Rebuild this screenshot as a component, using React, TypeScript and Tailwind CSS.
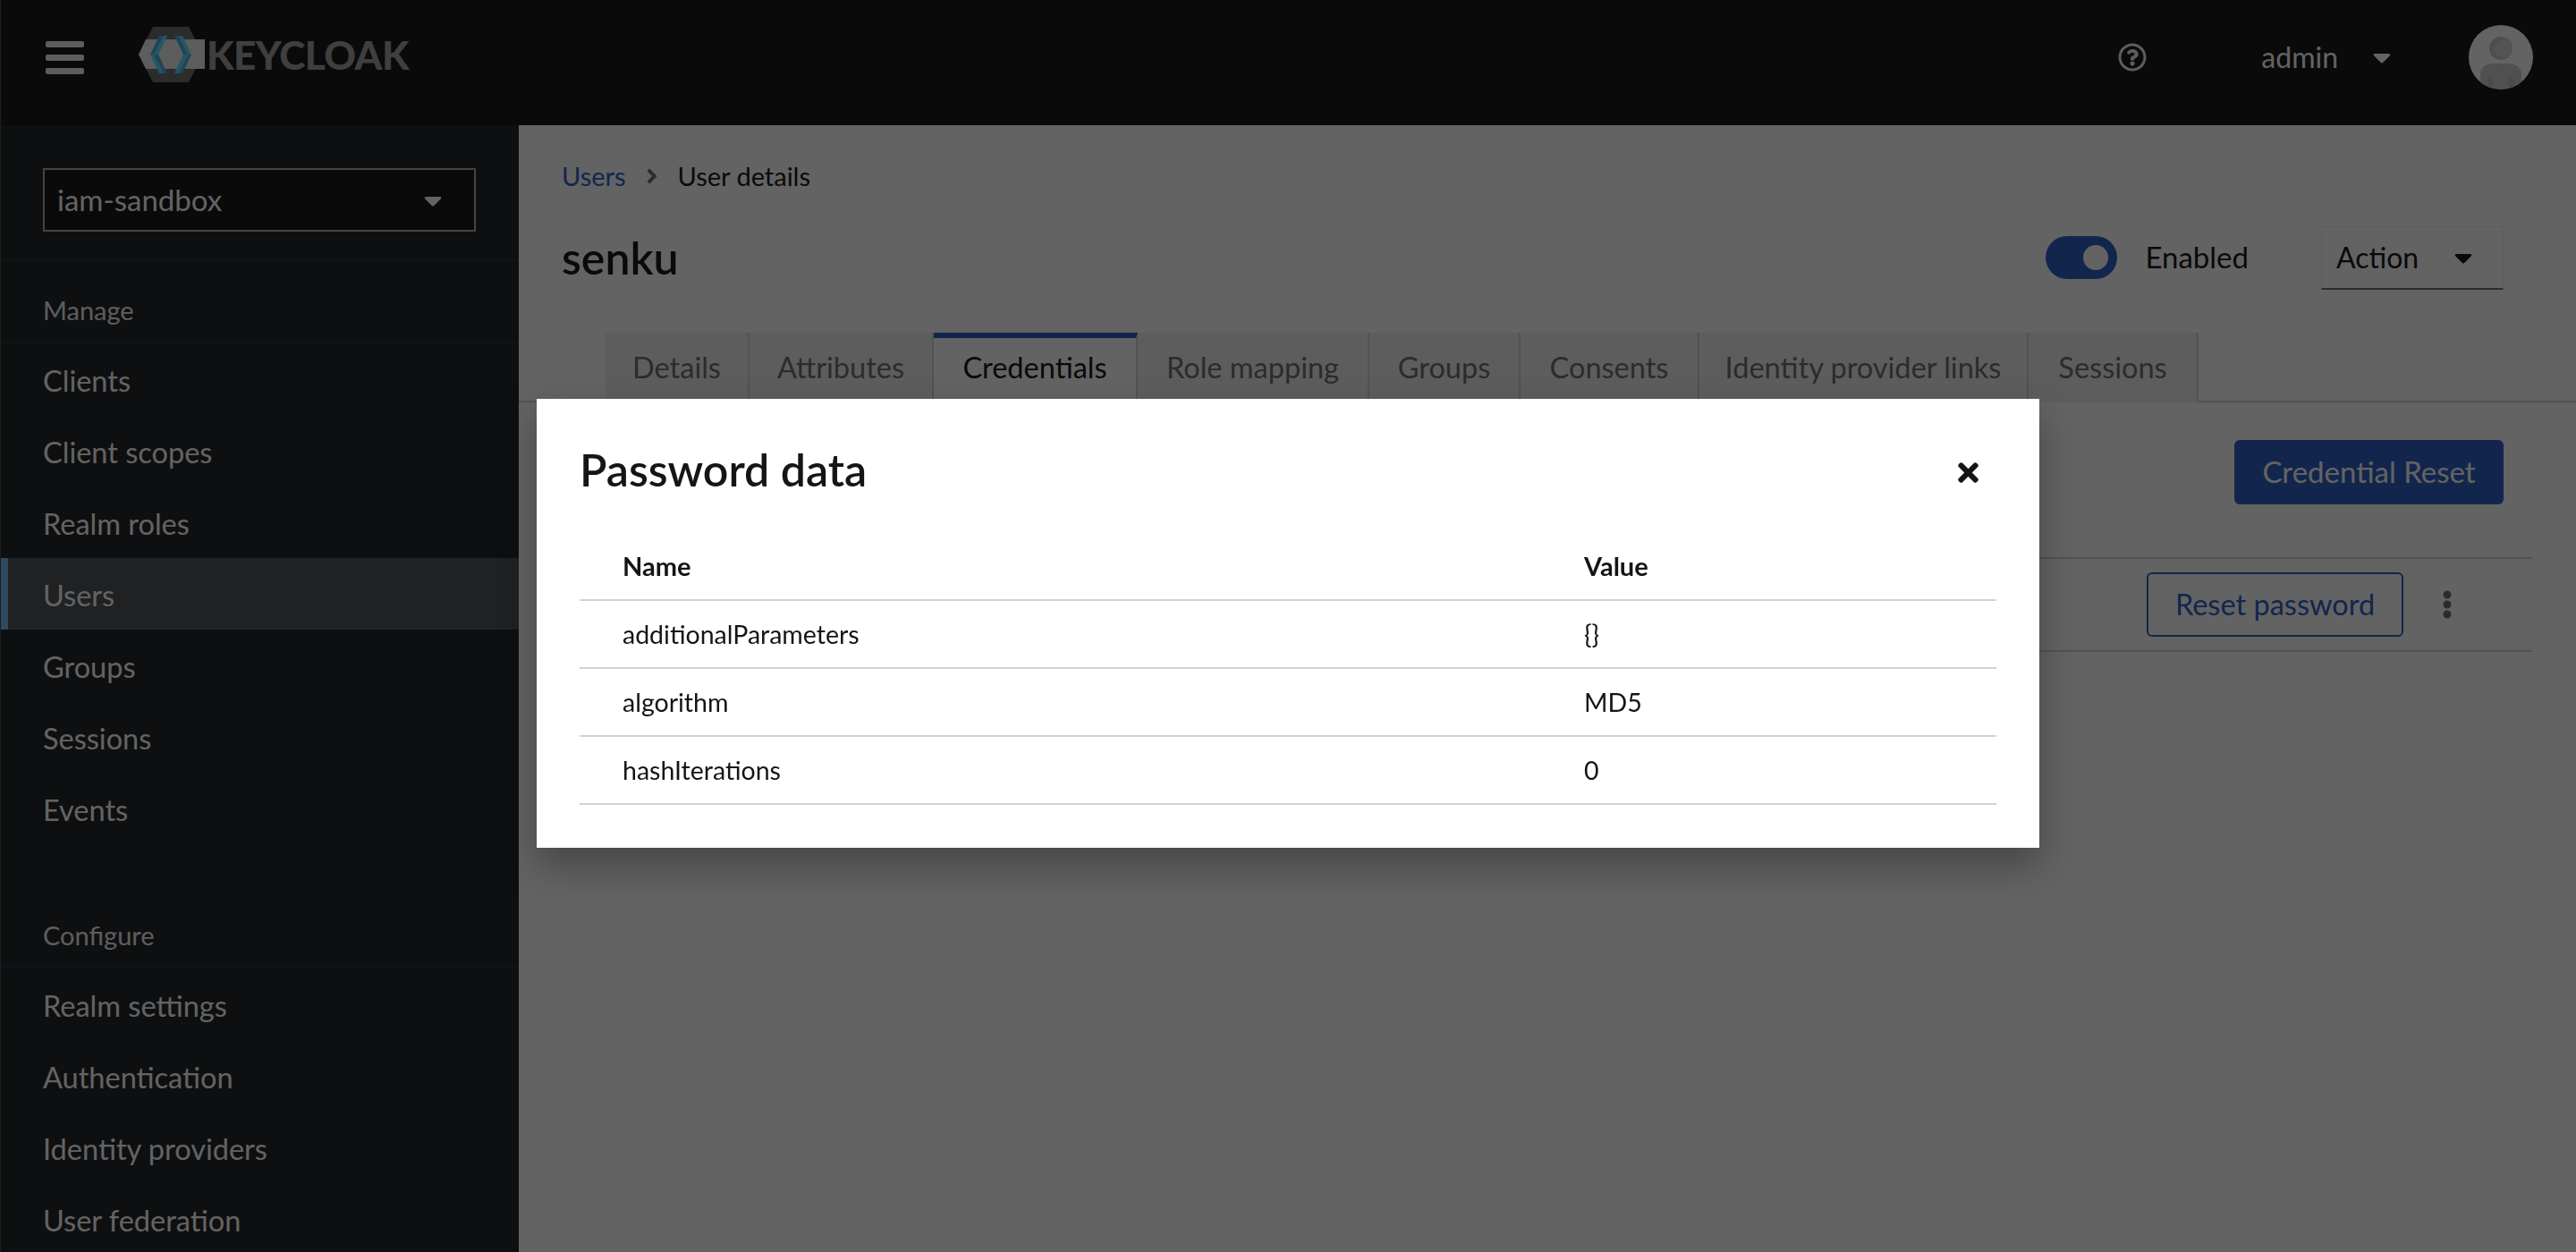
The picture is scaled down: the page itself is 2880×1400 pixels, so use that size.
import React from "react";
import { FaAngleRight, FaCaretDown, FaEllipsisV, FaRegQuestionCircle, FaTimes } from "react-icons/fa";

const manageItems = ["Clients", "Client scopes", "Realm roles", "Users", "Groups", "Sessions", "Events"];
const configureItems = ["Realm settings", "Authentication", "Identity providers", "User federation"];
const tabs = [
    { label: "Details", width: "w-[161px]" },
    { label: "Attributes", width: "w-[206px]" },
    { label: "Credentials", width: "w-[228px]" },
    { label: "Role mapping", width: "w-[259px]" },
    { label: "Groups", width: "w-[169px]" },
    { label: "Consents", width: "w-[200px]" },
    { label: "Identity provider links", width: "w-[368px]" },
    { label: "Sessions", width: "w-[190px]" },
];
const passwordData = [
    { name: "additionalParameters", value: "{}" },
    { name: "algorithm", value: "MD5" },
    { name: "hashIterations", value: "0" },
];

function Caret({ className }: { className: string }) {
    return <FaCaretDown className={`h-8 w-5 shrink-0 ${className}`} />;
}

function Logo() {
    return (
        <div className="mb-[6px] ml-[61px] flex items-center">
            <svg width="74" height="62" viewBox="0 0 74 62" className="shrink-0">
                <polygon points="0,31 16,0 56,0 72,31 56,62 16,62" fill="#6f6f6f" />
                <polygon points="0,31 8,14 74,14 74,47 8,47" fill="#eeeeee" />
                {/* left chevron */}
                <polygon points="23,10 28,10 17,31 13,31" fill="#47b0e2" />
                <polygon points="28,10 32,10 22,31 17,31" fill="#5ae0ff" />
                <polygon points="13,31 17,31 28,52 23,52" fill="#5ae0ff" />
                <polygon points="17,31 22,31 32,52 28,52" fill="#47b0e2" />
                {/* right chevron */}
                <polygon points="40,10 45,10 55,31 50,31" fill="#47b0e2" />
                <polygon points="45,10 49,10 59,31 55,31" fill="#5ae0ff" />
                <polygon points="50,31 55,31 45,52 40,52" fill="#5ae0ff" />
                <polygon points="55,31 59,31 49,52 45,52" fill="#47b0e2" />
            </svg>
            <span className="ml-[2px] text-[44px] leading-none font-black tracking-[-0.5px] text-[#a0a0a0]">KEYCLOAK</span>
        </div>
    );
}

function Avatar() {
    return (
        <svg width="72" height="72" viewBox="0 0 72 72" className="mr-[48px] shrink-0">
            <clipPath id="avatar-clip">
                <circle cx="36" cy="36" r="36" />
            </clipPath>
            <g clipPath="url(#avatar-clip)">
                <rect width="72" height="72" fill="#ffffff" />
                <circle cx="36" cy="26" r="13" fill="#c9c9c9" />
                <circle cx="39" cy="26" r="10" fill="#d8d8d8" />
                <path d="M13 72 V55 C13 47 20 43 28 43 H44 C52 43 59 47 59 55 V72 Z" fill="#cdcdcd" />
                <path d="M21 72 V62 C21 60 24 58 27 59 V72 Z" fill="#bdbdbd" />
                <path d="M51 72 V62 C51 60 48 58 45 59 V72 Z" fill="#bdbdbd" />
            </g>
        </svg>
    );
}

function NavItem({ label }: { label: string }) {
    const active = label === "Users";
    return (
        <div className={`flex h-[80px] items-center pt-[4px] text-[32.5px] text-white ${active ? "border-l-[8px] border-[#73bcf7] bg-[#4f5255] pl-[39px]" : "pl-[47px]"}`}>
            {label}
        </div>
    );
}

function Sidebar() {
    return (
        <aside className="h-[1260px] w-[579px] shrink-0 overflow-hidden bg-[#212427]">
            <div className="h-[152px] border-b-2 border-[#2c2f32] pt-[48px] pl-[47px]">
                <div className="flex h-[71px] w-[484px] items-center justify-between border-2 border-[#b0b0b0] bg-[#151515] pr-[36px] pl-[14px] text-[33px] text-white">
                    iam-sandbox
                    <Caret className="text-white" />
                </div>
            </div>
            <div className="flex h-[92px] items-center border-b-2 border-[#2c2f32] pt-[20px] pl-[47px] text-[29px] text-[#f0f0f0]">Manage</div>
            {manageItems.map((item) => (
                <NavItem key={item} label={item} />
            ))}
            <div className="flex h-[139px] items-end border-b-2 border-[#2c2f32] pb-[14px] pl-[47px] text-[29px] text-[#f0f0f0]">Configure</div>
            {configureItems.map((item) => (
                <NavItem key={item} label={item} />
            ))}
        </aside>
    );
}

function Main() {
    return (
        <main className="h-[1260px] flex-1 overflow-hidden bg-white text-[#151515]">
            <div className="flex h-[114px] items-center gap-[21px] pl-[48px] text-[29px]">
                <span className="text-[#2b5fc4]">Users</span>
                <FaAngleRight className="h-[26px] w-[16px] text-[#6a6e73]" />
                <span>User details</span>
            </div>
            <div className="mb-[50px] flex h-[68px] items-center justify-between pr-[81px] pl-[48px]">
                <h1 className="text-[50px] font-semibold">senku</h1>
                <div className="flex items-center">
                    <span className="flex h-[48px] w-[80px] items-center justify-end rounded-full bg-[#2b5fc4] pr-[10px]">
                        <span className="h-[28px] w-[28px] rounded-full bg-white" />
                    </span>
                    <span className="ml-[31px] text-[33px]">Enabled</span>
                    <div className="ml-[81px] flex h-[71px] w-[204px] items-center justify-between border border-b-2 border-[#f0f0f0] border-b-[#6a6e73] pr-[34px] pl-[16px] text-[32px]">
                        Action
                        <Caret className="text-[#151515]" />
                    </div>
                </div>
            </div>
            <div className="flex h-[78px] border-b-2 border-[#d2d2d2] pl-[97px]">
                {tabs.map((tab) => {
                    const active = tab.label === "Credentials";
                    return (
                        <div
                            key={tab.label}
                            className={`flex h-[78px] items-center justify-center border-r-2 border-[#d2d2d2] text-[32.5px] ${tab.width} ${active ? "border-t-[6px] border-t-[#2b5fc4] bg-white pb-[6px] text-[#151515]" : "bg-[#f0f0f0] text-[#6a6e73]"}`}
                        >
                            {tab.label}
                        </div>
                    );
                })}
            </div>
            <div className="flex h-[173px] items-start justify-end pt-[42px] pr-[81px]">
                <button className="h-[72px] w-[301px] rounded-[6px] bg-[#2b5fc4] text-[33px] text-white">Credential Reset</button>
            </div>
            <div className="mr-[49px] ml-[48px] flex h-[106px] items-center justify-end border-y-2 border-[#d2d2d2] pr-[85px]">
                <button className="h-[72px] w-[287px] rounded-[6px] border-2 border-[#2b5fc4] text-[32.5px] text-[#2b5fc4]">Reset password</button>
                <FaEllipsisV className="ml-[39px] h-[32px] w-[20px] text-[#6a6e73]" />
            </div>
        </main>
    );
}

function PasswordModal() {
    return (
        <div className="fixed inset-0 flex items-center justify-center bg-[rgba(3,3,3,0.62)]">
            <div className="relative mb-[6px] h-[502px] w-[1680px] bg-white px-[48px] pt-[49px] text-[#151515] shadow-[0_20px_40px_rgba(3,3,3,0.3)]">
                <FaTimes className="absolute top-[66px] right-[68px] h-[33px] w-[23px]" />
                <h2 className="h-[60px] text-[50px] leading-[60px] font-semibold">Password data</h2>
                <table className="mt-[40px] w-full table-fixed text-left text-[28.5px]">
                    <colgroup>
                        <col className="w-[1075px]" />
                        <col />
                    </colgroup>
                    <thead>
                        <tr className="border-b-2 border-[#d2d2d2]">
                            <th className="h-[76px] pl-[48px] text-[29px] font-bold">Name</th>
                            <th className="h-[76px] pl-[48px] text-[29px] font-bold">Value</th>
                        </tr>
                    </thead>
                    <tbody>
                        {passwordData.map((row) => (
                            <tr key={row.name} className="border-b-2 border-[#d2d2d2]">
                                <td className="h-[76px] pl-[48px]">{row.name}</td>
                                <td className="h-[76px] pl-[48px]">{row.value}</td>
                            </tr>
                        ))}
                    </tbody>
                </table>
            </div>
        </div>
    );
}

export default function App() {
    return (
        <div className="relative h-[1400px] w-[2880px] overflow-hidden border-l border-[#4a4a4a] font-['Lato','Liberation_Sans',sans-serif]">
            <header className="flex h-[140px] items-center justify-between bg-[#151515] pb-[12px] pl-[50px] text-white">
                <div className="flex items-center">
                    <svg width="43" height="37" viewBox="0 0 43 37" fill="#f0f0f0">
                        <rect width="43" height="7" rx="2" />
                        <rect y="15" width="43" height="7" rx="2" />
                        <rect y="30" width="43" height="7" rx="2" />
                    </svg>
                    <Logo />
                </div>
                <div className="flex items-center">
                    <FaRegQuestionCircle className="h-[32px] w-[32px] text-[#f0f0f0]" />
                    <span className="ml-[128px] text-[32px]">admin</span>
                    <Caret className="ml-[39px] text-white" />
                    <span className="w-[87px]" />
                    <Avatar />
                </div>
            </header>
            <div className="flex">
                <Sidebar />
                <Main />
            </div>
            <PasswordModal />
        </div>
    );
}
